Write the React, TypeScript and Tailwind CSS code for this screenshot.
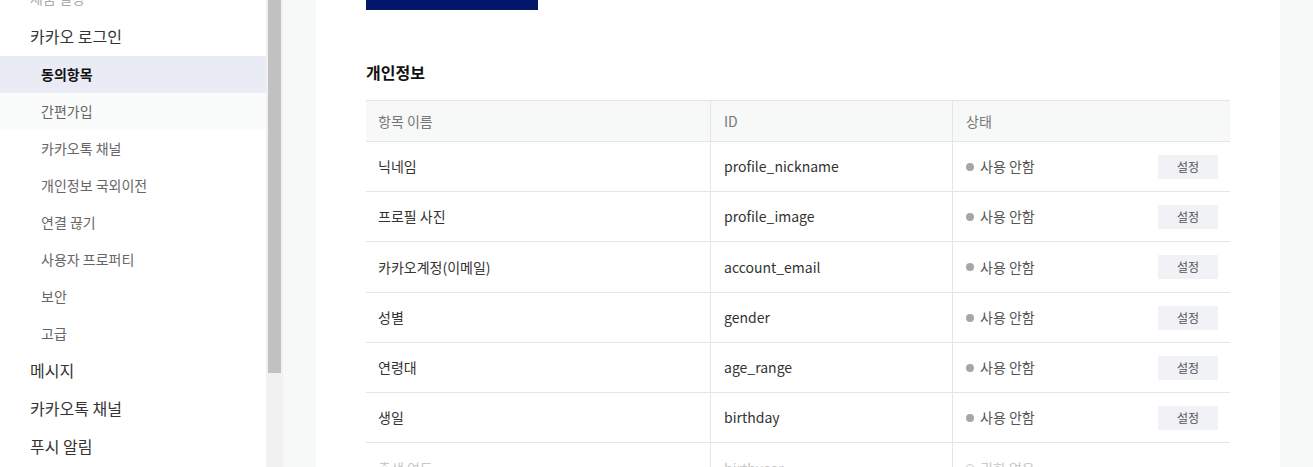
import React from "react";

const font = { fontFamily: '"Noto Sans CJK KR", "Noto Sans", sans-serif' };

const subItems = [
  "동의항목",
  "간편가입",
  "카카오톡 채널",
  "개인정보 국외이전",
  "연결 끊기",
  "사용자 프로퍼티",
  "보안",
  "고급",
];

const rows = [
  { name: "닉네임", id: "profile_nickname" },
  { name: "프로필 사진", id: "profile_image" },
  { name: "카카오계정(이메일)", id: "account_email" },
  { name: "성별", id: "gender" },
  { name: "연령대", id: "age_range" },
  { name: "생일", id: "birthday" },
];

export default function App() {
  return (
    <div className="flex h-[467px] w-[1313px] overflow-hidden bg-[#f7f8f8]" style={font}>
      {/* Sidebar */}
      <div className="w-[266px] shrink-0 bg-white">
        <div className="mt-[-19px]">
          <div className="flex h-[37px] items-center pb-[2px] pl-[30px] text-[14px] text-[#aaa]">제품 설정</div>
          <div className="flex h-[38px] items-center pb-[2px] pl-[30px] text-[16px] text-[#333]">카카오 로그인</div>
          {subItems.map((s, i) => (
            <div
              key={s}
              className={
                i === 0
                  ? "flex h-[37px] items-center bg-[#e9ecf4] pl-[41px] text-[14px] font-bold text-[#111]"
                  : i === 1
                  ? "flex h-[37px] items-center bg-[#fafbfb] pl-[41px] text-[14px] text-[#666]"
                  : "flex h-[37px] items-center pl-[41px] text-[14px] text-[#666]"
              }
            >
              {s}
            </div>
          ))}
          <div className="flex h-[38px] items-center pb-[2px] pl-[30px] text-[16px] text-[#333]">메시지</div>
          <div className="flex h-[38px] items-center pb-[2px] pl-[30px] text-[16px] text-[#333]">카카오톡 채널</div>
          <div className="flex h-[38px] items-center pb-[2px] pl-[30px] text-[16px] text-[#333]">푸시 알림</div>
        </div>
      </div>
      {/* Scrollbar */}
      <div className="w-[17px] shrink-0 bg-[#f1f1f1] px-[2px]">
        <div className="h-[373px] w-[13px] bg-[#c1c1c1]" />
      </div>
      {/* Main */}
      <div className="flex-1 pl-[33px] pr-[33px]">
        <div className="h-full bg-white px-[50px]">
          <div className="h-[10px] w-[172px] bg-[#03166a]" />
          <div className="mt-[50px] flex h-[24px] items-center text-[16px] font-bold text-[#111]">개인정보</div>
          <div className="mt-[16px] border-t border-[#e5e5e5]">
            <div className="grid h-[41px] grid-cols-[345px_242px_1fr] border-b border-[#e5e5e5] bg-[#f7f8f8] text-[14px] text-[#777]">
              <div className="flex items-center border-r border-[#e5e5e5] pl-[12px]">항목 이름</div>
              <div className="flex items-center border-r border-[#e5e5e5] pl-[13px]">ID</div>
              <div className="flex items-center pl-[13px]">상태</div>
            </div>
            {rows.map((r, i) => (
              <div
                key={r.id}
                className={
                  (i === 2 ? "h-[51px] " : "h-[50px] ") +
                  "grid grid-cols-[345px_242px_1fr] border-b border-[#e5e5e5] text-[14px] text-[#333]"
                }
              >
                <div className="flex items-center border-r border-[#e5e5e5] pl-[12px]">{r.name}</div>
                <div className="flex items-center border-r border-[#e5e5e5] pl-[13px]">{r.id}</div>
                <div className="flex items-center justify-between pl-[13px] pr-[12px]">
                  <div className="flex items-center text-[#555]">
                    <span className="mr-[6px] h-[8px] w-[8px] rounded-full bg-[#a6a6a6]" />
                    사용 안함
                  </div>
                  <div className="flex h-[24px] w-[60px] items-center justify-center bg-[#f1f2f6] text-[12px] text-[#555]">
                    설정
                  </div>
                </div>
              </div>
            ))}
            <div className="grid h-[50px] grid-cols-[345px_242px_1fr] text-[14px] text-[#c8c8c8]">
              <div className="flex items-center border-r border-[#e5e5e5] pl-[12px]">출생 연도</div>
              <div className="flex items-center border-r border-[#e5e5e5] pl-[13px]">birthyear</div>
              <div className="flex items-center pl-[13px]">
                <span className="mr-[6px] h-[8px] w-[8px] rounded-full border border-[#c8c8c8]" />
                권한 없음
              </div>
            </div>
          </div>
        </div>
      </div>
    </div>
  );
}
